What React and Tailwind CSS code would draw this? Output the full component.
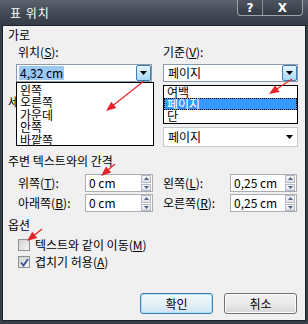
import React from 'react';

const Arrow = ({ x1, y1, x2, y2 }) => {
  const a = Math.atan2(y2 - y1, x2 - x1);
  const len = 10;
  const w = 4;
  const bx = x2 - len * Math.cos(a);
  const by = y2 - len * Math.sin(a);
  const px = -Math.sin(a) * w;
  const py = Math.cos(a) * w;
  return (
    <g>
      <line x1={x1} y1={y1} x2={bx + Math.cos(a) * 2} y2={by + Math.sin(a) * 2} stroke="#e4252b" strokeWidth="1.2" />
      <polygon points={`${x2},${y2} ${bx + px},${by + py} ${bx - px},${by - py}`} fill="#e4252b" />
    </g>
  );
};

const Tri = ({ up }) => (
  <svg width="7" height="4" viewBox="0 0 7 4">
    <path d={up ? 'M0 4h7L3.5 0z' : 'M0 0h7L3.5 4z'} fill="#000" />
  </svg>
);

const DropBtn = () => (
  <div className="w-[15px] h-[16px] border border-[#3c7fb1] rounded-[2px] bg-gradient-to-b from-[#eaf6fd] via-[#c4e6f8] to-[#a7d9f5] flex items-center justify-center">
    <Tri />
  </div>
);

const SpinArrow = ({ up }) => (
  <svg width="5" height="3" viewBox="0 0 5 3">
    <path d={up ? 'M0 3h5L2.5 0z' : 'M0 0h5L2.5 3z'} fill="#4d6185" />
  </svg>
);

const Spin = ({ value, w }) => (
  <div className={`${w} h-[18px] border border-[#abadb3] bg-white flex items-center`}>
    <span className="flex-1 pl-[3px] leading-[14px]">{value}</span>
    <div className="w-[10px] h-[16px] flex flex-col gap-px mr-px">
      <div className="flex-1 border border-[#b3b8c2] bg-gradient-to-b from-[#f4f5f7] to-[#dfe2e8] flex items-center justify-center">
        <SpinArrow up />
      </div>
      <div className="flex-1 border border-[#b3b8c2] bg-gradient-to-b from-[#f4f5f7] to-[#dfe2e8] flex items-center justify-center">
        <SpinArrow />
      </div>
    </div>
  </div>
);

const Check = ({ checked }) => (
  <div className="w-[12px] h-[12px] border border-[#8e8f8f] bg-gradient-to-br from-[#cfd1d4] to-[#f6f6f6] flex items-center justify-center">
    {checked && (
      <svg width="9" height="9" viewBox="0 0 9 9">
        <path d="M1 4.5l2.5 3L8 1" stroke="#3b4f8f" strokeWidth="1.8" fill="none" />
      </svg>
    )}
  </div>
);

export default function App() {
  return (
    <div className="w-[308px] h-[324px] relative overflow-hidden bg-[#373d49] text-black text-[12px] font-['Noto_Sans_CJK_KR',sans-serif]">
      {/* title bar */}
      <div className="h-[25px] relative flex items-center pl-[10px] bg-gradient-to-b from-[#5d636e] via-[#434955] to-[#363c48]">
        <span className="text-white text-[12px] leading-none tracking-[1px]">표 위치</span>
        <div className="absolute top-0 left-[237px] flex h-[16px] border border-t-0 border-[#9ea3ab] rounded-b-[4px] bg-gradient-to-b from-[#4e5460] to-[#353b46]">
          <div className="w-[25px] flex items-center justify-center text-white font-bold text-[12px] leading-none font-['DejaVu_Sans',sans-serif] border-r border-[#8c9199]">?</div>
          <div className="w-[39px] flex items-center justify-center text-white font-bold text-[12px] leading-none font-['DejaVu_Sans',sans-serif]">X</div>
        </div>
      </div>

      {/* body */}
      <div className="ml-[2px] w-[304px] h-[296px] border border-[#1d2129] bg-[#f0f0f0] flex flex-col">
        <div className="mt-[2px] h-[14px] leading-[14px] pl-[5px]">가로</div>

        <div className="mt-[3px] h-[14px] leading-[14px] flex">
          <div className="pl-[15px] w-[160px]">위치(<u>S</u>):</div>
          <div>기준(<u>V</u>):</div>
        </div>

        <div className="mt-[5px] h-[18px] flex">
          <div className="ml-[13px] w-[136px] h-[18px] relative border border-[#8d9aab] bg-white flex items-center">
            <span className="ml-[2px] px-[1px] bg-[#99c9f3] leading-[14px]">4,32 cm</span>
            <div className="ml-auto mr-0"><DropBtn /></div>
            <div className="absolute left-[-1px] top-[17px] w-[138px] h-[64px] border border-black bg-white z-10 pt-px">
              {['왼쪽', '오른쪽', '가운데', '안쪽', '바깥쪽'].map((t) => (
                <div key={t} className="h-[12.4px] leading-[12px] pl-[3px]">{t}</div>
              ))}
            </div>
          </div>
          <div className="ml-[11px] w-[135px] h-[18px] relative border border-[#8d9aab] bg-white flex items-center">
            <span className="pl-[4px] leading-[14px]">페이지</span>
            <div className="ml-auto"><DropBtn /></div>
            <div className="absolute left-[-1px] top-[20px] w-[135px] h-[39px] border border-black bg-white z-10">
              <div className="h-[12px] leading-[12px] pl-[3px]">여백</div>
              <div className="h-[12px] leading-[12px] pl-[3px] bg-[#3399ff] text-white outline outline-1 outline-dotted outline-[#000] -outline-offset-1">페이지</div>
              <div className="h-[12px] leading-[12px] pl-[3px]">단</div>
            </div>
          </div>
        </div>

        <div className="mt-[13px] h-[14px] leading-[14px] pl-[5px]">세로</div>
        <div className="mt-[3px] h-[14px]" />
        <div className="mt-[1px] h-[20px] flex">
          <div className="ml-[160px] w-[135px] h-[20px] border border-[#c5c8cc] bg-white flex items-center">
            <span className="pl-[4px] leading-[14px]">페이지</span>
            <div className="ml-auto mr-[4px]"><Tri /></div>
          </div>
        </div>

        <div className="mt-[6px] h-[15px] leading-[15px] pl-[5px]">주변 텍스트와의 간격</div>

        <div className="mt-[6px] h-[18px] flex items-center pl-[15px]">
          <div className="w-[67px]">위쪽(<u>T</u>):</div>
          <Spin value="0 cm" w="w-[68px]" />
          <div className="ml-[10px] w-[67px]">왼쪽(<u>L</u>):</div>
          <Spin value="0,25 cm" w="w-[67px]" />
        </div>
        <div className="mt-[2px] h-[18px] flex items-center pl-[15px]">
          <div className="w-[67px]">아래쪽(<u>B</u>):</div>
          <Spin value="0 cm" w="w-[68px]" />
          <div className="ml-[10px] w-[67px]">오른쪽(<u>R</u>):</div>
          <Spin value="0,25 cm" w="w-[67px]" />
        </div>

        <div className="mt-[6px] h-[14px] leading-[14px] pl-[5px]">옵션</div>
        <div className="mt-[6px] h-[14px] flex items-center pl-[15px] gap-[5px]">
          <Check />
          <span className="leading-[14px]">텍스트와 같이 이동(<u>M</u>)</span>
        </div>
        <div className="mt-[3px] h-[14px] flex items-center pl-[15px] gap-[5px]">
          <Check checked />
          <span className="leading-[14px]">겹치기 허용(<u>A</u>)</span>
        </div>

        <div className="mt-[24px] h-[21px] flex justify-end pr-[8px] gap-[11px]">
          <button className="w-[73px] h-[21px] rounded-[3px] border border-[#3c7fb1] bg-gradient-to-b from-[#f2f8fc] via-[#e4f0f8] to-[#cfe5f4] shadow-[inset_0_0_0_1px_#aee2fb] leading-[14px]">확인</button>
          <button className="w-[73px] h-[21px] rounded-[3px] border border-[#707070] bg-gradient-to-b from-[#f2f2f2] via-[#ebebeb] to-[#d6d6d6] shadow-[inset_0_0_0_1px_#fcfcfc] leading-[14px]">취소</button>
        </div>
      </div>

      {/* annotation arrows */}
      <svg className="absolute inset-0 pointer-events-none z-20" width="308" height="324">
        <Arrow x1={144} y1={81} x2={106} y2={111} />
        <Arrow x1={292} y1={79} x2={269} y2={94} />
        <Arrow x1={115} y1={164} x2={101} y2={176} />
        <Arrow x1={42} y1={229} x2={27} y2={241} />
      </svg>
    </div>
  );
}
